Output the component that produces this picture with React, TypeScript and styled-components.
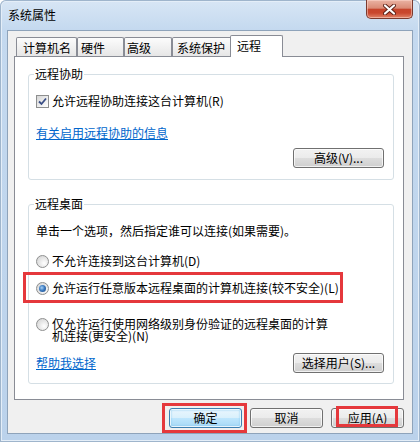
import React from "react";
import styled, { createGlobalStyle, css } from "styled-components";

const Global = createGlobalStyle`
  html, body { margin: 0; padding: 0; }
  body {
    width: 420px; height: 442px; overflow: hidden; background: #fff;
    font-family: "Noto Sans CJK SC", "Noto Sans", sans-serif;
    font-size: 12px; color: #000;
  }
`;

const Frame = styled.div`
  width: 420px; height: 442px; box-sizing: border-box;
  display: flex; flex-direction: column;
  padding: 0 7px 8px 7px;
  background: linear-gradient(180deg, #d8e6f5 0%, #c4d9ef 30px, #bbd2eb 100%);
  border-radius: 6px 6px 0 0;
  box-shadow: inset 0 0 0 1px #9fb5cc, inset 0 0 0 2px #e4eef8;
`;

const TitleBar = styled.div`
  height: 30px; flex: none;
  display: flex; justify-content: space-between; align-items: flex-start;
`;

const Title = styled.div`
  margin-top: 8px; padding-left: 1px; line-height: 14px; color: #000;
`;

const CloseButton = styled.div`
  width: 47px; height: 19px; box-sizing: border-box;
  border: 1px solid #7b3a2e; border-top: none;
  border-radius: 0 0 5px 5px;
  background: linear-gradient(180deg, #eab3a3 0%, #da8b76 45%, #c6452c 52%, #c9472e 72%, #e08469 100%);
  box-shadow: inset 0 0 0 1px rgba(255, 220, 210, 0.5);
  display: flex; align-items: center; justify-content: center;
`;

const Client = styled.div`
  flex: 1; display: flex; flex-direction: column;
  background: #f0f0f0;
  border: 1px solid #8ea3ba;
  padding: 4px 8px 5px 6px;
`;

const TabRow = styled.div`
  display: flex; align-items: flex-end; height: 22px;
  margin-left: 2px; margin-bottom: -1px;
`;

const Tab = styled.div<{ $w: number; $pad: number; $active?: boolean }>`
  box-sizing: border-box; width: ${(p) => p.$w}px; padding-left: ${(p) => p.$pad}px;
  border: 1px solid #898c95; border-bottom: none;
  border-radius: 2px 2px 0 0;
  line-height: 17px; padding-top: 1px; white-space: nowrap;
  ${(p) =>
    p.$active
      ? css`
          height: 22px; margin-left: -2px; background: #fff;
          position: relative; z-index: 1;
        `
      : css`
          height: 19px; margin-bottom: 1px;
          background: linear-gradient(180deg, #fcfcfc 0%, #f0f0f0 55%, #e6e6e6 100%);
        `}
`;

const Panel = styled.div`
  width: 390px; height: 344px; box-sizing: border-box;
  border: 1px solid #898c95; background: #fff;
  padding: 17px 9px 15px 13px;
  display: flex; flex-direction: column; gap: 24px;
`;

const GroupBox = styled.div<{ $pb: number }>`
  border: 1px solid #d5dfe5; border-radius: 3px;
  display: flex; flex-direction: column;
  padding: 0 9px ${(p) => p.$pb}px 7px;
`;

const Legend = styled.div`
  align-self: flex-start; margin: -8px 0 0 -2px; padding: 0 1px;
  background: #fff; line-height: 14px;
`;

const Row = styled.div<{ $mt: number }>`
  display: flex; align-items: center; gap: 3px;
  margin-top: ${(p) => p.$mt}px; line-height: 14px; white-space: nowrap;
`;

const SpreadRow = styled.div<{ $mt: number }>`
  display: flex; align-items: center; justify-content: space-between;
  margin-top: ${(p) => p.$mt}px;
`;

const EndRow = styled.div<{ $mt: number }>`
  display: flex; justify-content: flex-end; margin-top: ${(p) => p.$mt}px;
`;

const Text = styled.div<{ $mt: number }>`
  margin-top: ${(p) => p.$mt}px; line-height: 14px; white-space: nowrap;
`;

const WrapOption = styled.div<{ $mt: number }>`
  display: flex; align-items: flex-start; gap: 3px;
  margin-top: ${(p) => p.$mt}px;
`;

const WrapLabel = styled.div`
  width: 282px; line-height: 12px;
`;

const Link = styled.span`
  color: #0066cc; text-decoration: underline; line-height: 14px; white-space: nowrap;
`;

const Box = styled.div`
  width: 13px; height: 13px; box-sizing: border-box; flex: none;
  border: 1px solid #8e8f8f;
  background: linear-gradient(135deg, #d6d6d6 0%, #f4f4f4 70%, #fff 100%);
  display: flex; align-items: center; justify-content: center;
`;

const Radio = styled.div<{ $checked?: boolean }>`
  width: 13px; height: 13px; box-sizing: border-box; flex: none;
  border-radius: 50%; border: 1px solid #8e8f8f;
  background: radial-gradient(circle at 65% 65%, #ffffff 0%, #e8e8e8 45%, #cfcfcf 100%);
  display: flex; align-items: center; justify-content: center;
  &::after {
    content: "";
    width: 7px; height: 7px; border-radius: 50%;
    display: ${(p) => (p.$checked ? "block" : "none")};
    background: radial-gradient(circle at 40% 40%, #a9d3f5 0%, #3e7cc2 45%, #123f7a 100%);
  }
`;

const Highlight = styled.div<{ $t: number; $r: number; $b: number; $l: number; $mt?: number }>`
  position: relative; display: inline-flex; align-self: flex-start;
  margin-top: ${(p) => p.$mt ?? 0}px;
  &::after {
    content: ""; position: absolute; pointer-events: none;
    top: ${(p) => p.$t}px; right: ${(p) => p.$r}px;
    bottom: ${(p) => p.$b}px; left: ${(p) => p.$l}px;
    border: 3px solid #e5383c;
  }
`;

const Button = styled.button<{ $w: number; $primary?: boolean }>`
  width: ${(p) => p.$w}px; height: 20px; box-sizing: border-box; padding: 0;
  font-family: inherit; font-size: 12px; color: #000; line-height: 16px;
  border: 1px solid #707070; border-radius: 3px;
  background: linear-gradient(180deg, #f2f2f2 0%, #ebebeb 50%, #dddddd 51%, #cfcfcf 100%);
  box-shadow: inset 0 0 0 1px rgba(255, 255, 255, 0.7);
  ${(p) =>
    p.$primary &&
    css`
      border-color: #3c7fb1;
      background: linear-gradient(180deg, #eaf6fd 0%, #d9f0fc 50%, #bee6fd 51%, #a7d9f5 100%);
      box-shadow: inset 0 0 0 1px rgba(255, 255, 255, 0.8), inset 0 0 2px 1px #7ec4ee;
    `}
`;

const BottomBar = styled.div`
  display: flex; justify-content: flex-end; align-items: center; gap: 8px;
  margin-top: 8px;
`;

const CloseX = () => (
  <svg width="13" height="11" viewBox="0 0 13 11">
    <path d="M2 1.5 L11 9.5 M11 1.5 L2 9.5" stroke="#5b2016" strokeWidth="4" strokeLinecap="round" />
    <path d="M2 1.5 L11 9.5 M11 1.5 L2 9.5" stroke="#ffffff" strokeWidth="2.2" strokeLinecap="round" />
  </svg>
);

const Check = () => (
  <svg width="9" height="9" viewBox="0 0 9 9">
    <path d="M1 4.5 L3.5 7 L8 1.5" fill="none" stroke="#3b4f86" strokeWidth="1.8" />
  </svg>
);

export default function App() {
  return (
    <>
      <Global />
      <Frame>
        <TitleBar>
          <Title>系统属性</Title>
          <CloseButton>
            <CloseX />
          </CloseButton>
        </TitleBar>
        <Client>
          <TabRow>
            <Tab $w={61} $pad={6}>计算机名</Tab>
            <Tab $w={47} $pad={3}>硬件</Tab>
            <Tab $w={48} $pad={2}>高级</Tab>
            <Tab $w={60} $pad={4}>系统保护</Tab>
            <Tab $w={53} $pad={6} $active>远程</Tab>
          </TabRow>
          <Panel>
            <GroupBox $pb={11}>
              <Legend>远程协助</Legend>
              <Row $mt={13}>
                <Box>
                  <Check />
                </Box>
                <span>允许远程协助连接这台计算机(R)</span>
              </Row>
              <Row $mt={18}>
                <Link>有关启用远程协助的信息</Link>
              </Row>
              <EndRow $mt={8}>
                <Button $w={91}>高级(V)...</Button>
              </EndRow>
            </GroupBox>
            <GroupBox $pb={10}>
              <Legend>远程桌面</Legend>
              <Text $mt={13}>单击一个选项，然后指定谁可以连接(如果需要)。</Text>
              <Row $mt={16}>
                <Radio />
                <span>不允许连接到这台计算机(D)</span>
              </Row>
              <Highlight $t={-9} $r={-4} $b={-8} $l={-13} $mt={13}>
                <Row $mt={0}>
                  <Radio $checked />
                  <span>允许运行任意版本远程桌面的计算机连接(较不安全)(L)</span>
                </Row>
              </Highlight>
              <WrapOption $mt={23}>
                <Radio />
                <WrapLabel>仅允许运行使用网络级别身份验证的远程桌面的计算机连接(更安全)(N)</WrapLabel>
              </WrapOption>
              <SpreadRow $mt={11}>
                <Link>帮助我选择</Link>
                <Button $w={91}>选择用户(S)...</Button>
              </SpreadRow>
            </GroupBox>
          </Panel>
          <BottomBar>
            <Highlight $t={-5} $r={-5} $b={-5} $l={-7}>
              <Button $w={73} $primary>确定</Button>
            </Highlight>
            <Button $w={73}>取消</Button>
            <Highlight $t={-2} $r={6} $b={1} $l={5}>
              <Button $w={73}>应用(A)</Button>
            </Highlight>
          </BottomBar>
        </Client>
      </Frame>
    </>
  );
}
